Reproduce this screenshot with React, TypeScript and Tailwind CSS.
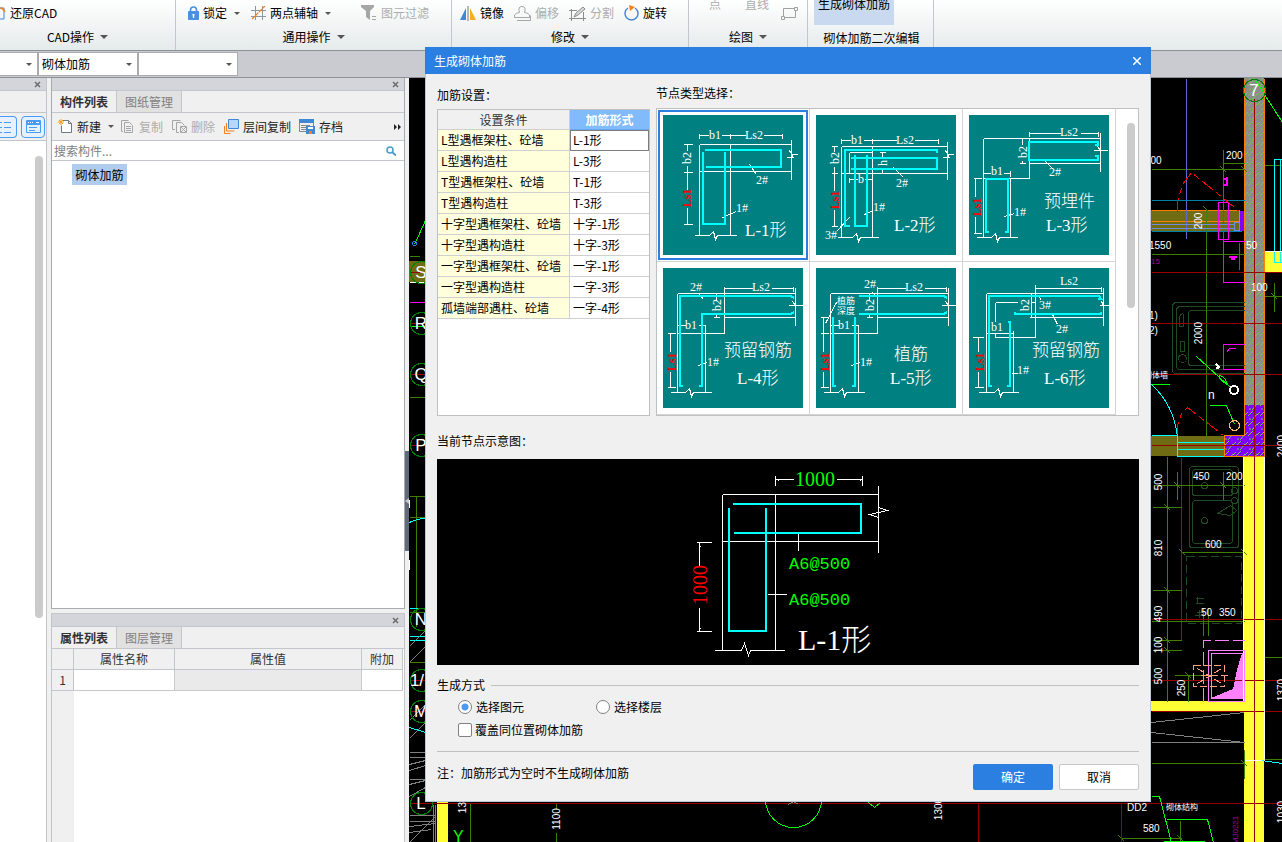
import React, { useState } from 'react';
import clsx from 'clsx';

const CYAN = '#00ffff';
const OLIVE = '#3f7f00';
const MAROON = '#990000';
const DARK = '#1f4a24';

const settings = [
  ['L型遇框架柱、砼墙', 'L-1形'],
  ['L型遇构造柱', 'L-3形'],
  ['T型遇框架柱、砼墙', 'T-1形'],
  ['T型遇构造柱', 'T-3形'],
  ['十字型遇框架柱、砼墙', '十字-1形'],
  ['十字型遇构造柱', '十字-3形'],
  ['一字型遇框架柱、砼墙', '一字-1形'],
  ['一字型遇构造柱', '一字-3形'],
  ['孤墙端部遇柱、砼墙', '一字-4形'],
];

type Label = { x: number; y: number; t: string; size?: number; red?: boolean; rot?: boolean };
type Node = { name: string; lines: string; bars: string; labels: Label[] };

const nodes: Node[] = [
  {
    name: 'L-1形',
    lines:
      'M36 18v5M67 18v5M119 18v5M36 20h9M58 20h24M100 20h19M36 29h92M36 56h92M36 29v91M67 29v91M128 24v40M123 42h7l-4-7 3 4h5M20 29h9M20 57h9M20 109h9M24 29v6M24 50v24M24 92v17M86 49l7 10M59 102l14-6M31 120h15l4-4 2 8 2-4h19',
    bars: 'M42 35H118V52H43M40 37V109H62V37',
    labels: [
      { x: 46, y: 24, t: 'b1' },
      { x: 82, y: 24, t: 'Ls2' },
      { x: 24, y: 43, t: 'b2', rot: true },
      { x: 24, y: 83, t: 'Ls1', rot: true, red: true },
      { x: 93, y: 69, t: '2#' },
      { x: 73, y: 97, t: '1#' },
      { x: 82, y: 121, t: 'L-1形', size: 17 },
    ],
  },
  {
    name: 'L-2形',
    lines:
      'M25 23v5M56 23v5M122 23v5M25 25h9M47 25h33M98 25h24M25 31h106M25 58h106M25 31v91M56 31v91M33 37h23M33 37v21M131 26v38M126 42h7l-4-7 3 4h5M15 31h6M15 58h6M15 111h6M18 31v5M18 51v24M18 94v17M33 62v5M33 64h8M48 64h8M63 37h6M66 37v5M66 53v5M77 52l10 10M48 99l9-4M33 102l-13 14M21 122h15l4-4 2 8 2-4h18',
    bars: 'M121 38V35H29V111H34M35 43H121V54H35M39 40V111H51V40',
    labels: [
      { x: 35, y: 29, t: 'b1' },
      { x: 80, y: 29, t: 'Ls2' },
      { x: 19, y: 43, t: 'b2', rot: true },
      { x: 19, y: 85, t: 'Ls1', rot: true, red: true },
      { x: 67, y: 48, t: 'h', rot: true },
      { x: 42, y: 68, t: 'b' },
      { x: 80, y: 72, t: '2#' },
      { x: 57, y: 96, t: '1#' },
      { x: 9, y: 124, t: '3#' },
      { x: 78, y: 116, t: 'L-2形', size: 17 },
    ],
  },
  {
    name: 'L-3形',
    lines:
      'M60 16v5M129 16v5M60 18h31M111 18h18M14 23h117M60 23v40M14 63h46M60 48h71M131 17v39M124 35h7l-3-4 3 4h7M14 23v99M41 63v59M14 58h7M34 58h7M41 55v6M53 23v6M53 45v3M50 48h6M4 63h8M4 118h8M6 63v18M6 101v17M74 44l10 10M35 101l10-3M7 122h15l4-4 2 8 2-4h18',
    bars: 'M126 30H129V27H60V45H129V41H126M20 117H17V64H39V117H36',
    labels: [
      { x: 91, y: 21, t: 'Ls2' },
      { x: 54, y: 37, t: 'b2', rot: true },
      { x: 22, y: 60, t: 'b1' },
      { x: 8, y: 92, t: 'Ls1', rot: true, red: true },
      { x: 80, y: 61, t: '2#' },
      { x: 45, y: 101, t: '1#' },
      { x: 75, y: 92, t: '预埋件', size: 17 },
      { x: 77, y: 116, t: 'L-3形', size: 17 },
    ],
  },
  {
    name: 'L-4形',
    lines:
      'M61 18v5M130 18v5M61 20h28M108 20h22M14 25h118M61 18v47M14 65h47M61 49h71M132 19v38M125 37h7l-3-4 3 4h7M14 25v99M42 57v67M14 57h8M35 57h7M53 25v6M53 46v3M50 49h6M4 65h8M4 119h8M7 65v18M7 103v16M36 26l4 5M35 97l9-3M7 124h15l4-4 2 8 2-4h18',
    bars: 'M131 30L128 28H17V118H20M131 44L128 46H39V118H36',
    labels: [
      { x: 89, y: 23, t: 'Ls2' },
      { x: 27, y: 23, t: '2#' },
      { x: 54, y: 37, t: 'b2', rot: true },
      { x: 22, y: 61, t: 'b1' },
      { x: 9, y: 94, t: 'Ls1', rot: true, red: true },
      { x: 44, y: 98, t: '1#' },
      { x: 61, y: 88, t: '预留钢筋', size: 17 },
      { x: 74, y: 116, t: 'L-4形', size: 17 },
    ],
  },
  {
    name: 'L-5形',
    lines:
      'M61 18v5M130 18v5M61 20h28M108 20h22M14 25h118M61 18v47M14 65h47M61 49h71M132 19v38M125 37h7l-3-4 3 4h7M14 25v99M42 57v67M14 57h8M35 57h7M53 25v6M53 46v3M50 49h6M4 49h8M4 65h8M4 119h8M7 49v34M7 103v16M20 34l-11 21M56 24l5 5M35 97l9-3M7 124h15l4-4 2 8 2-4h18',
    bars: 'M43 28H128L131 30M43 46H128L131 44M17 49V118H20M39 49V118H36',
    labels: [
      { x: 89, y: 23, t: 'Ls2' },
      { x: 48, y: 20, t: '2#' },
      { x: 54, y: 37, t: 'b2', rot: true },
      { x: 22, y: 61, t: 'b1' },
      { x: 21, y: 36, t: '植筋', size: 9 },
      { x: 21, y: 46, t: '深度', size: 9 },
      { x: 9, y: 94, t: 'Ls1', rot: true, red: true },
      { x: 44, y: 98, t: '1#' },
      { x: 78, y: 92, t: '植筋', size: 17 },
      { x: 74, y: 116, t: 'L-5形', size: 17 },
    ],
  },
  {
    name: 'L-6形',
    lines:
      'M132 18v5M66 20h66M17 25h117M66 16v53M60 49h74M134 19v38M130 37h4l-2-4 3 4h4M17 25v99M44 62v62M17 65h27M26 34h22M62 34h4M26 34v19M26 65v4M26 69h40M62 25v4M62 29v20M3 69h11M5 119h9M9 69v14M9 103v16M69 27l3 5M83 46l5 10M42 105h6M9 124h16l4-4 2 8 2-4h16',
    bars: 'M129 31H132L130 28H20V118H23M132 44V46H46V44M39 54H41V118H38',
    labels: [
      { x: 91, y: 17, t: 'Ls2' },
      { x: 56, y: 37, t: 'b2', rot: true },
      { x: 70, y: 41, t: '3#' },
      { x: 22, y: 63, t: 'b1' },
      { x: 87, y: 65, t: '2#' },
      { x: 11, y: 94, t: 'Ls1', rot: true, red: true },
      { x: 48, y: 106, t: '1#' },
      { x: 63, y: 88, t: '预留钢筋', size: 17 },
      { x: 75, y: 116, t: 'L-6形', size: 17 },
    ],
  },
];

const NodeThumb = ({ node }: { node: Node }) => (
  <svg viewBox="0 0 140 140" className="size-[140px] bg-[#008080] font-['Liberation_Serif','Noto_Sans_CJK_SC',serif]">
    <g fill="none" shapeRendering="crispEdges">
      <path d={node.lines} stroke="#fff" transform="translate(.5 .5)" />
      <path d={node.bars} stroke={CYAN} strokeWidth="2" />
    </g>
    {node.labels.map((l) =>
      l.rot ? (
        <text
          key={l.t}
          transform={`translate(${l.x + 4} ${l.y}) rotate(-90)`}
          textAnchor="middle"
          fontSize="12"
          fontWeight={l.red ? 700 : 400}
          fill={l.red ? '#ff0000' : '#fff'}
        >
          {l.t}
        </text>
      ) : (
        <text
          key={l.t + l.y}
          x={l.x}
          y={l.y}
          fontSize={l.size ?? 12}
          fontWeight={l.size === 17 ? 300 : 400}
          fill="#fff"
        >
          {l.t}
        </text>
      ),
    )}
  </svg>
);

const Preview = () => (
  <svg viewBox="0 0 702 206" className="block h-[206px] w-full bg-black">
    <g fill="none" shapeRendering="crispEdges">
      <g transform="translate(.5 .5)" stroke="#fff">
        <path d="M338 16v10M425 16v10M338 20h18M399 20h26M285 35h156M285 82h156M285 35v156M338 35v156M441 26v67M361 74v17M330 135h19M259 83h15M259 172h15M262 83v23M262 148v24M277 191h27M313 191h34" />
        <path d="M304 191l3-7 4 12 2-5M441 58l-9-3 18-4-9-3" />
        <path strokeWidth="2" d="M340 20h1M422 20h1M262 86v1M262 168v1" />
      </g>
      <path stroke={CYAN} strokeWidth="2" d="M296 45H424V74H297M292 49V172H329V49" />
    </g>
    <g className="font-['Liberation_Mono','Noto_Sans_CJK_SC',monospace]" fill="#00ff00" fontSize="17">
      <text x="352" y="110">
        A6@500
      </text>
      <text x="352" y="146">
        A6@500
      </text>
    </g>
    <g className="font-['Liberation_Serif','Noto_Sans_CJK_SC',serif]">
      <text x="358" y="27" fontSize="20" fill="#00ff00">
        1000
      </text>
      <text transform="translate(270 126) rotate(-90)" textAnchor="middle" fontSize="20" fill="#ff0000">
        1000
      </text>
      <text x="361" y="191" fontSize="30" fontWeight="300" fill="#fff">
        L-1形
      </text>
    </g>
  </svg>
);

const bubbles = [
  { y: 272, t: 'S' },
  { y: 323, t: 'R' },
  { y: 374, t: 'Q' },
  { y: 445, t: 'P' },
  { y: 619, t: 'N' },
  { y: 680, t: '1/' },
  { y: 711, t: 'M' },
  { y: 803, t: 'L' },
];

const dims = [
  { x: 1145, y: 164, t: '500' },
  { x: 1226, y: 159, t: '200' },
  { x: 1149, y: 249, t: '1550' },
  { x: 1246, y: 249, t: '50' },
  { x: 1251, y: 291, t: '100' },
  { x: 1144, y: 319, t: 'x1)' },
  { x: 1144, y: 334, t: 'x2)' },
  { x: 1193, y: 480, t: '450' },
  { x: 1226, y: 480, t: '200' },
  { x: 1205, y: 548, t: '600' },
  { x: 1201, y: 616, t: '50' },
  { x: 1219, y: 616, t: '350' },
  { x: 1127, y: 811, t: 'DD2' },
  { x: 1143, y: 832, t: '580' },
];

const verticalDims = [
  { x: 1198, y: 221, t: '200' },
  { x: 1198, y: 333, t: '2000' },
  { x: 1281, y: 446, t: '2400' },
  { x: 1158, y: 482, t: '500' },
  { x: 1158, y: 548, t: '810' },
  { x: 1158, y: 614, t: '490' },
  { x: 1158, y: 645, t: '100' },
  { x: 1158, y: 676, t: '500' },
  { x: 1181, y: 688, t: '250' },
  { x: 1281, y: 690, t: '1370' },
  { x: 1281, y: 812, t: '1030' },
  { x: 462, y: 802, t: '1390' },
  { x: 556, y: 819, t: '1100' },
  { x: 938, y: 809, t: '1300' },
];

const Drawing = () => (
  <svg viewBox="409 78 873 764" preserveAspectRatio="xMinYMin slice" className="block size-full bg-black">
    <defs>
      <pattern id="wall" width="12" height="10" patternUnits="userSpaceOnUse">
        <rect width="12" height="10" fill="#8c8c8c" />
        <path d="M0 6l5-5M4 10l5-6M9 5l3-3M1 9h2" stroke="#72c850" />
      </pattern>
      <pattern id="column" width="12" height="10" patternUnits="userSpaceOnUse">
        <rect width="12" height="10" fill="#8000ff" />
        <path d="M0 6l5-5M4 10l5-6M9 5l3-3M1 9h2" stroke="#72c850" />
      </pattern>
    </defs>
    <g fill="none" shapeRendering="crispEdges">
      <g stroke="none">
        <path fill="#706c14" d="M409 261h30v21h-30zM1151 210h88v21h-88zM1151 436h73v20h-73z" />
        <path fill="#ffff33" d="M1244 456h20v386h-20zM1100 701h144v10h-144zM1265 251h17v21h-17zM437 802h11v40h-11z" />
        <path fill="url(#wall)" d="M1244 78h20v327h-20z" />
        <path fill="url(#column)" d="M1244 405h20v51h-40v-21h20z" />
        <path fill="#8000ff" d="M1240 211h4v20h-4z" />
        <path fill="#ff80ff" d="M1242 653v45h-31l22-9 4-19z" />
      </g>
      <g transform="translate(.5 .5)">
        <path stroke="#ff7f00" d="M1244 78v357h-20v21h40V78M1151 210h88v21M1151 221h88" />
        <path
          stroke={DARK}
          d="M1244 302h-68q-4 0-4 4v63q0 4 4 4h68M1244 306h-64q-4 0-4 4v55q0 4 4 4h64M1244 310h-53q-3 0-3 3v49q0 3 3 3h53M1181 457v183M1179 316q4-6 4 0v10h-4zM1180 341h4v10h-4z"
        />
        <path
          stroke={DARK}
          d="M1192 466h43q3 0 3 3v75q0 3-3 3h-43q-3 0-3-3v-75q0-3 3-3zM1195 469h34q3 0 3 3v20q0 3-3 3h-34q-3 0-3-3v-20q0-3 3-3zM1195 500h34q3 0 3 3v36q0 4-3 4h-34q-3 0-3-4v-36q0-3 3-3zM1217 513l13-8 6 5-6 5z"
        />
        <path stroke={DARK} strokeDasharray="8 4" d="M1186 556h55v67h-55z" />
        <path stroke={DARK} d="M1195 598h8M1197 596v7M1195 603h8M1196 612h6M1199 609v8M1194 615h10" />
        <g stroke={DARK}>
          <circle cx="1182" cy="358" r="4" />
          <circle cx="1204" cy="485" r="3" />
          <circle cx="1204" cy="520" r="3" />
          <circle cx="1234" cy="490" r="3" />
          <circle cx="1234" cy="500" r="3" />
        </g>
        <path
          stroke={OLIVE}
          d="M1151 169h93M1223 149v91M1223 163h21M1264 165h18M1206 209v227M1151 254h93M1239 242v27M1264 296h18M1274 282v29M1153 485h91M1177 471v28M1223 471v28M1167 456v245M1152 507h29M1152 590h29M1152 640h29M1152 650h29M1182 552h62M1151 621h93M1203 607v28M1208 607v28M1174 675h40M1188 675v26M1151 763h93M1244 749v29M1264 657h18M1264 625v46M1276 619h6M1121 838h60M1180 820v22M1121 820v22M1264 759h18"
        />
        <path
          stroke={OLIVE}
          d="M1220 166l6 6M1241 166l6 6M1203 206l6 6M1271 293l6 6M1164 504l6 6M1164 587l6 6M1164 637l6 6M1164 647l6 6M1179 549l6 6M1241 549l6 6M1174 482l6 6M1220 482l6 6M1185 672l6 6M1241 760l6 6M1118 835l6 6M1177 835l6 6"
        />
        <path stroke={OLIVE} d="M409 397h16M409 496h16M409 517h16M416 496v130M409 256h10M409 662h16M409 612h16M470 802v40M556 802v6M556 832v10" />
        <path
          stroke={MAROON}
          d="M1151 272h131M1151 323h131M1151 374h131M1151 445h131M1151 619h131M1151 680h131M1151 711h131M409 803h873M1254 98v744M1121 803v39M978 802v40"
        />
        <path stroke={MAROON} d="M409 272h16M409 323h16M409 374h16M409 445h16M409 680h16M409 711h16" />
        <path stroke="#6666cc" d="M1186 78v160" />
        <path stroke="#6a8be0" d="M1151 224h83M1151 228h83M1234 222h5v8h-5z" />
        <path stroke="#0080a8" d="M1151 200h93M1151 231h90" />
        <path stroke="#ff00ff" d="M1218 202h10v37h-10zM1244 241h-21v41h21M1244 344h-21v25h21M1226 352l3-4h6M409 302h16" />
        <path stroke="#ff00ff" strokeWidth="2" d="M1228 256h8M1230 258h4M1222 178h5M1222 184h5M1226 176v9" />
        <path stroke="#ff0000" strokeDasharray="14 4 6 4" d="M1177 211v-10l5-17 9-12 48 39M1177 435v-10l4-12 6-6 36 28" />
        <path stroke={CYAN} d="M1151 384q22 20 26 52M1177 435v21M1151 435h26M1177 442h46M1177 449h46M1177 456h46M1282 159h-8v103h8M1280 159v103M1261 760l21 3" />
        <path stroke={CYAN} d="M409 522q8-4 16-4M409 608h16M409 636h16M409 640h16M409 727l16 5" />
        <path stroke="#00ff00" d="M1255 80l27 42M1196 356l34 31M1209 405h17l8 19M1151 384h18M1151 796h8l12 46M1166 819h41l6 23M425 220l-11 24M409 326h16M868 802l6 5 6-5" />
        <path stroke="#00ff00" strokeWidth="2" d="M1163 841h41" />
        <path stroke="#fff" d="M409 282h16M1243 456v245M1264 456v304M1264 251h17M1244 760h17" />
        <path stroke="#ff80ff" d="M1208 650h36v51h-36zM1211 653h31v45h-31z" />
        <path stroke="#ff80ff" strokeDasharray="14 4" d="M1203 701v-61h41" />
        <path stroke="#ffa080" strokeDasharray="7 3" d="M1193 665h31v21h-31zM1197 668l24 15M1197 683l24-15M1200 675h27" />
        <path stroke="#808080" d="M1151 722l93-10M1151 732l93 10M1151 742h93M788 804l5-3 5 3" />
        <path
          stroke="#808080"
          d="M409 646l16-16M409 662l16-16M409 720l16-16M409 738l16-16M409 752h16M409 757h16M409 764l16-4M409 770l16-5M409 779h16M409 784l16-4M409 796l16-9M409 815h26M409 821h26M409 826l26-3M409 832l22-3M409 842l26-26M433 804v38M435 804v38"
        />
        <circle cx="414" cy="243" r="2" stroke="#2080ff" />
        <circle cx="1234" cy="425" r="5" stroke="#ffb870" />
        <circle cx="793" cy="799" r="28" stroke="#00ff00" />
        <circle cx="1254" cy="90" r="11" stroke="#008000" />
        {bubbles.map((b) => (
          <circle key={b.t} cx="421" cy={b.y} r="11" stroke="#008000" />
        ))}
      </g>
      <circle cx="1234" cy="390" r="4" stroke="#fff" strokeWidth="2" />
      <path stroke="#00ff00" d="M1219 376q5-1 8 7-7-1-8-7" />
      <path stroke="#fff" strokeWidth="2" d="M1216 364l4 4M1216 368h3M409 560v10M409 500v8" />
    </g>
    <g fill="#fff" className="font-['Liberation_Sans','Noto_Sans_CJK_SC',sans-serif]">
      <g fontSize="17" textAnchor="middle">
        {bubbles.map((b) => (
          <text key={b.t} x={b.t === '1/' ? 417 : 421} y={b.y + 6}>
            {b.t}
          </text>
        ))}
        <text x="1254" y="96">
          7
        </text>
      </g>
      <text x="1208" y="399" fontSize="12">
        n
      </text>
      <text x="1144" y="378" fontSize="8">
        砌体墙
      </text>
      <text x="1166" y="810" fontSize="8">
        砌体结构
      </text>
      <text x="453" y="842" fontSize="16" fill="#00ff00">
        Y
      </text>
    </g>
    <g fill="#fff" fontSize="10" className="font-['Liberation_Sans',sans-serif]">
      {dims.map((d) => (
        <text key={d.t + d.y + d.x} x={d.x} y={d.y}>
          {d.t}
        </text>
      ))}
      {verticalDims.map((d) => (
        <text key={d.t + d.y} transform={`translate(${d.x + 4} ${d.y}) rotate(-90)`} textAnchor="middle">
          {d.t}
        </text>
      ))}
      <g fill="#a000a0" fontSize="8">
        <text x="1140" y="264">
          M915
        </text>
        <text transform="translate(1238 830) rotate(-90)" textAnchor="middle">
          MJ0221
        </text>
      </g>
    </g>
  </svg>
);

const Caret = ({ small }: { small?: boolean }) => (
  <svg viewBox="0 0 8 4" className={small ? 'h-[3px] w-1.5' : 'h-1 w-2'}>
    <path d="M0 0h8L4 4z" fill="#555" />
  </svg>
);

const CloseMark = () => (
  <svg viewBox="0 0 7 7" className="size-[7px]">
    <path d="M1 1l5 5M6 1L1 6" stroke="#6c6c6c" strokeWidth="1.5" />
  </svg>
);

type ToolProps = { label: string; icon: React.ReactNode; disabled?: boolean; caret?: boolean; className?: string };

const Tool = ({ label, icon, disabled, caret, className }: ToolProps) => (
  <button
    type="button"
    disabled={disabled}
    className={clsx('flex items-center gap-1 whitespace-nowrap', disabled && 'text-[#adadad]', className)}
  >
    {icon}
    {label}
    {caret && (
      <span className="ml-[3px]">
        <Caret small />
      </span>
    )}
  </button>
);

type GroupProps = { title: string; caret?: boolean; className?: string; children: React.ReactNode };

const Group = ({ title, caret = true, className, children }: GroupProps) => (
  <section className={clsx('flex h-full shrink-0 flex-col border-r border-[#c3c6ca]', className)}>
    <div className="flex h-[26px] items-center">{children}</div>
    <div className={clsx('flex items-center justify-center gap-1.5', caret ? 'h-[22px]' : 'h-6 pl-0.5')}>
      {title}
      {caret && <Caret />}
    </div>
  </section>
);

const Ribbon = () => (
  <header className="flex h-[51px] shrink-0 border-b border-[#8d9298] bg-linear-to-b from-white to-[#e5eaeb]">
    <Group title="CAD操作" className="w-44 pr-5">
      <Tool
        label="还原CAD"
        icon={
          <svg viewBox="0 0 6 14" className="h-3.5 w-1.5" fill="none">
            <path d="M0 2h4v11H0" stroke="#3f87d8" />
            <path d="M0 2q3 0 5 4" stroke="#f08020" strokeWidth="1.5" />
          </svg>
        }
      />
    </Group>
    <Group title="通用操作" className="w-[276px]">
      <Tool
        className="ml-3"
        label="锁定"
        caret
        icon={
          <svg viewBox="0 0 11 14" className="h-3.5 w-[11px]" fill="none">
            <path d="M2.5 6V4a3 3 0 016 0v2" stroke="#4a90e2" strokeWidth="1.6" />
            <rect y="5" width="11" height="9" rx="1" fill="#4a90e2" />
            <path d="M4.5 8h2v1l-.5 3h-1l-.5-3z" fill="#fff" />
          </svg>
        }
      />
      <Tool
        className="ml-[11px]"
        label="两点辅轴"
        caret
        icon={
          <svg viewBox="0 0 15 14" className="h-3.5 w-[15px]" fill="none">
            <path d="M4.500 0v14M11.500 0v14M0 4.500h15M0 10.500h15" stroke="#8d979e" />
            <path d="M1 13L14 0" stroke="#f08020" strokeWidth="1.3" strokeDasharray="4 1" />
          </svg>
        }
      />
      <Tool
        className="ml-[30px]"
        label="图元过滤"
        disabled
        icon={
          <svg viewBox="0 0 16 16" className="size-4">
            <path d="M0 0h13v2L9 6v9l-4-3V6L0 2z" fill="#a6a6a6" />
            <path d="M11 11.500h4M11 14.500h4" stroke="#a6a6a6" />
          </svg>
        }
      />
    </Group>
    <Group title="修改" className="w-[237px]">
      <Tool
        className="ml-2"
        label="镜像"
        icon={
          <svg viewBox="0 0 16 15" className="h-[15px] w-4">
            <path d="M6 2v12H0z" fill="#3f87d8" />
            <path d="M10 2v12h6z" fill="#f6ae1c" />
            <path d="M8 0v15" stroke="#6b7880" />
          </svg>
        }
      />
      <Tool
        className="ml-2.5"
        label="偏移"
        disabled
        icon={
          <svg viewBox="0 0 17 15" className="h-[15px] w-[17px]" fill="none" stroke="#a6a6a6">
            <path d="M.5 11.500V9q1-2 5-2.500-2-6 2.500-6t2.500 6q4 .5 5 2.500v2.500zM3 14.500h13.500v-5M.5 11.500h15" />
          </svg>
        }
      />
      <Tool
        className="ml-2.5"
        label="分割"
        disabled
        icon={
          <svg viewBox="0 0 17 15" className="h-[15px] w-[17px]" fill="none" stroke="#8c8c8c">
            <path d="M8 4.500H0M2.500 3v12M0 12.500h17M14.500 6v9" />
            <path d="M5 11l2-4 7-6 2 2-7 6z" fill="#d8d8d8" />
          </svg>
        }
      />
      <Tool
        className="ml-[9px]"
        label="旋转"
        icon={
          <svg viewBox="0 0 16 16" className="size-4" fill="none">
            <path d="M5 3a6.500 6.500 0 107 0" stroke="#3f87d8" strokeWidth="1.4" />
            <path d="M6 0l6 2-5 4z" fill="#f08020" />
          </svg>
        }
      />
    </Group>
    <Group title="绘图" className="w-[119px]">
      <div className="flex w-full items-center gap-6 pl-5 text-[#adadad]">
        <span className="-mt-[18px]">点</span>
        <span className="-mt-[18px]">直线</span>
        <svg viewBox="0 0 17 13" className="-ml-3 h-[13px] w-[17px]" fill="none" stroke="#a0a0a0">
          <path d="M2.500 1.500h12v9h-12z" />
          <path d="M.5 9.500h3v3h-3zM13.500 .5h3v3h-3z" fill="#f6f8f8" />
        </svg>
      </div>
    </Group>
    <Group title="砌体加筋二次编辑" caret={false} className="w-[126px] gap-px">
      <button type="button" className="ml-1.5 flex h-[25px] w-20 justify-center self-start bg-[#c9d9ef] leading-2">
        生成砌体加筋
      </button>
    </Group>
  </header>
);

const Combo = ({ label, value, className }: { label: string; value: string; className: string }) => (
  <div className={clsx('grid h-[22px] items-center bg-white outline outline-[#a9abaf]', className)}>
    <select aria-label={label} className="col-start-1 row-start-1 h-full w-full appearance-none pl-[3px]">
      <option>{value}</option>
    </select>
    <span className="pointer-events-none col-start-1 row-start-1 mr-[5px] flex justify-self-end">
      <Caret small />
    </span>
  </div>
);

const PanelHeader = () => (
  <div className="flex h-3 shrink-0 items-center justify-end bg-[#d3d5da] pr-[5px]">
    <button type="button" aria-label="关闭面板">
      <CloseMark />
    </button>
  </div>
);

const PanelTabs = ({ tabs }: { tabs: string[] }) => (
  <div role="tablist" className="flex h-[23px] shrink-0 border-y border-[#c3c6cc] bg-[#f0f0f0]">
    {tabs.map((t, i) => (
      <button
        key={t}
        role="tab"
        type="button"
        aria-selected={i === 0}
        className={clsx(
          'w-[65px] border-r border-[#c3c6cc] text-center',
          i === 0 ? 'font-bold text-[#333]' : 'bg-[#e1e1e1] text-[#808080]',
        )}
      >
        {t}
      </button>
    ))}
  </div>
);

const SideStrip = () => (
  <aside className="flex w-[47px] shrink-0 flex-col border-r border-[#c3c6cc] bg-white">
    <PanelHeader />
    <div className="h-[23px] shrink-0 border-y border-[#c3c6cc] bg-[#f0f0f0]" />
    <div className="flex h-7 shrink-0 items-center gap-1 border-b border-[#c3c6cc] bg-[#f0f0f0]">
      <button
        type="button"
        aria-label="列表视图"
        className="h-[22px] w-[17px] rounded-r-sm border border-l-0 border-[#4a9bf5] bg-[#e6f1fd]"
      >
        <svg viewBox="0 0 16 20" className="h-5 w-4" fill="none" stroke="#4a9bf5">
          <path d="M0 5.500h2M4 5.500h7M0 10.500h2M4 10.500h7M0 15.500h2M4 15.500h7" />
        </svg>
      </button>
      <button
        type="button"
        aria-label="窗口视图"
        className="flex h-[22px] w-6 items-center justify-center rounded-sm border border-[#4a9bf5] bg-[#e6f1fd]"
      >
        <svg viewBox="0 0 15 13" className="h-[13px] w-[15px]">
          <rect width="15" height="13" rx="1" fill="#4a9bf5" />
          <path d="M2 2.500h1M4 2.500h1M6 2.500h1M10 2.500h3" stroke="#fff" />
          <path d="M1 5h13v7H1z" fill="#e6f1fd" />
          <path d="M3 7.500h8M3 10.500h6" stroke="#4a9bf5" />
        </svg>
      </button>
    </div>
    <div className="mt-[15px] mr-[3px] h-[462px] w-2 self-end rounded-full bg-[#cbcbcb]" />
  </aside>
);

const ComponentPanel = () => (
  <section className="flex min-h-0 flex-1 flex-col border-x border-b border-[#a8abb0] bg-white">
    <PanelHeader />
    <PanelTabs tabs={['构件列表', '图纸管理']} />
    <div className="flex h-7 shrink-0 items-center border-b border-[#c3c6cc] bg-[#f0f0f0] text-[#222]">
      <Tool
        className="ml-1.5"
        label="新建"
        caret
        icon={
          <svg viewBox="0 0 15 15" className="size-[15px]" fill="none">
            <path d="M4.500 1.500h6l3 3v9h-10v-7" fill="#fff" stroke="#6d7a82" />
            <path d="M10.500 1.500v3h3" stroke="#6d7a82" />
            <path d="M0 3h6M3 0v6M1 1l4 4M5 1L1 5" stroke="#f5a01c" />
          </svg>
        }
      />
      <Tool
        className="ml-1.5"
        label="复制"
        disabled
        icon={
          <svg viewBox="0 0 15 15" className="size-[15px]" fill="none" stroke="#a6a6a6">
            <path d="M3 12.500H1.500V1.500h7M4.500 3.500h5l3 3v7h-8zM6 7.500h5M6 9.500h5M6 11.500h5" />
          </svg>
        }
      />
      <Tool
        className="ml-[9px]"
        label="删除"
        disabled
        icon={
          <svg viewBox="0 0 15 15" className="size-[15px]" fill="none" stroke="#a6a6a6">
            <path d="M3 10.500H.5v-9h8M7 13.500H4.500v-10h5l3 3M8.500 7.500h6v6h-6zM9 8l5 5M14 8l-5 5" />
          </svg>
        }
      />
      <Tool
        className="ml-[9px]"
        label="层间复制"
        icon={
          <svg viewBox="0 0 15 15" className="size-[15px]" fill="none">
            <path d="M4.500 .5h10v9h-10z" fill="#b9d6f8" stroke="#3f87d8" />
            <path d="M2.500 4v8h8M.5 7v7.500h6" stroke="#f08020" />
          </svg>
        }
      />
      <Tool
        className="ml-2"
        label="存档"
        icon={
          <svg viewBox="0 0 16 15" className="h-[15px] w-4" fill="none">
            <path d="M.5 .5h14v12H.5z" stroke="#7b8890" />
            <path d="M0 0h15v4H0z" fill="#3f87d8" />
            <path d="M2 6.500h9M2 8.500h5M2 10.500h5" stroke="#7b8890" />
            <path d="M7 7h9v8H7z" fill="#3f87d8" />
            <path d="M9 8h5v2H9z" fill="#fff" />
            <path d="M10 12h3v3h-3z" fill="#f08020" />
          </svg>
        }
      />
      <button type="button" aria-label="更多" className="mr-[3px] ml-auto">
        <svg viewBox="0 0 7 6" className="h-1.5 w-[7px]">
          <path d="M0 0l3 3-3 3zM4 0l3 3-3 3z" fill="#222" />
        </svg>
      </button>
    </div>
    <label className="flex h-5 shrink-0 items-center border-b border-[#c3c6cc] pr-2">
      <input
        type="text"
        aria-label="搜索构件"
        placeholder="搜索构件..."
        className="min-w-0 flex-1 pl-0.5 outline-none placeholder:text-[#808080]"
      />
      <svg viewBox="0 0 10 10" className="size-2.5" fill="none" stroke="#4a9cc8">
        <circle cx="4" cy="4" r="3" strokeWidth="1.500" />
        <path d="M6 6l4 3.500" strokeWidth="2" />
      </svg>
    </label>
    <div className="pt-[3px] pl-5">
      <div className="flex h-[21px] w-[55px] items-center justify-center bg-[#afcbed]">砌体加筋</div>
    </div>
  </section>
);

const PropertyPanel = () => (
  <section className="mt-1 flex h-[229px] shrink-0 flex-col border border-b-0 border-[#c3c6cc] bg-white">
    <PanelHeader />
    <PanelTabs tabs={['属性列表', '图层管理']} />
    <table className="w-[351px] table-fixed border-separate border-spacing-0 text-[#333] [&_td]:h-[21px] [&_td]:border-r [&_td]:border-b [&_td]:border-[#c9c9c9] [&_th]:h-[21px] [&_th]:border-r [&_th]:border-b [&_th]:border-[#c3c6cc] [&_th]:bg-[#f0f0f0] [&_th]:font-normal">
      <thead>
        <tr>
          <th className="w-[22px]" />
          <th className="w-[101px]">属性名称</th>
          <th>属性值</th>
          <th className="w-[41px]">附加</th>
        </tr>
      </thead>
      <tbody>
        <tr>
          <th>1</th>
          <td />
          <td className="bg-[#eaeaea]" />
          <td />
        </tr>
      </tbody>
    </table>
    <div className="w-[22px] flex-1 bg-[#f0f0f0]" />
  </section>
);

const SettingsTable = () => (
  <div className="h-[307px] border border-[#c0c0c0] bg-white">
    <table className="w-full table-fixed border-separate border-spacing-0">
      <thead>
        <tr>
          <th className="h-5 w-[132px] border-r border-b border-[#d0d0d0] bg-[#f0f0f0] font-normal text-[#333]">
            设置条件
          </th>
          <th className="h-5 border-b border-[#68a8f0] bg-[#82bbfb] font-bold text-white">加筋形式</th>
        </tr>
      </thead>
      <tbody>
        {settings.map(([condition, form], i) => (
          <tr key={condition}>
            <td className="h-[21px] border-r border-b border-[#d0d0d0] bg-[#ffffdc] pl-[3px] whitespace-nowrap">
              {condition}
            </td>
            <td
              className={clsx(
                'h-[21px] border-b border-[#d0d0d0] pl-[3px]',
                i === 0 && 'outline -outline-offset-1 outline-[#7d7d7d]',
              )}
            >
              {form}
            </td>
          </tr>
        ))}
      </tbody>
    </table>
  </div>
);

const RebarDialog = () => {
  const [selected, setSelected] = useState('L-1形');
  const [target, setTarget] = useState('element');

  return (
    <div
      role="dialog"
      aria-label="生成砌体加筋"
      className="absolute top-[47px] left-[425px] w-[726px] border-x border-b border-[#b9c6d6] bg-[#f0f0f0] px-[11px] pb-[11px]"
    >
      <div className="-mx-3 flex h-[27px] items-center justify-between bg-[#2b7fe0] pr-2.5 pl-[9px] text-white">
        <span>生成砌体加筋</span>
        <button type="button" aria-label="关闭">
          <svg viewBox="0 0 8 8" className="size-2">
            <path d="M0 0l8 8M8 0L0 8" stroke="#fff" strokeWidth="1.500" />
          </svg>
        </button>
      </div>
      <div className="flex gap-1.5">
        <div className="w-[213px] shrink-0">
          <h2 className="pt-[13px] pb-1.5">加筋设置：</h2>
          <SettingsTable />
        </div>
        <div className="min-w-0 flex-1">
          <h2 className="pt-[11px] pb-[7px]">节点类型选择：</h2>
          <div className="flex h-[308px] justify-between border border-[#c0c0c0] bg-white pr-[3px]">
            <div className="grid grid-cols-[153px_153px_153px] grid-rows-[153px_153px]">
              {nodes.map((node) => (
                <div key={node.name} className="border-r border-b border-[#d4d4d4] p-px">
                  <button
                    type="button"
                    aria-label={node.name}
                    onClick={() => setSelected(node.name)}
                    className={clsx(
                      'flex size-full items-center justify-center border-2',
                      selected === node.name ? 'border-[#2b7fe0]' : 'border-transparent',
                    )}
                  >
                    <NodeThumb node={node} />
                  </button>
                </div>
              ))}
            </div>
            <div className="mt-3.5 h-[185px] w-2 rounded-full bg-[#cbcbcb]" />
          </div>
        </div>
      </div>
      <h2 className="pt-[17px] pb-2.5">当前节点示意图：</h2>
      <Preview />
      <fieldset className="mt-3 border-t border-[#c0c0c0]">
        <legend className="pr-1.5">生成方式</legend>
        <div className="flex pt-1.5 pl-[21px]">
          {[
            ['element', '选择图元'],
            ['floor', '选择楼层'],
          ].map(([value, label]) => (
            <label key={value} className="flex w-[138px] items-center gap-1">
              <input
                type="radio"
                name="target"
                value={value}
                checked={target === value}
                onChange={() => setTarget(value)}
                className="size-3.5 appearance-none rounded-full border border-[#808080] bg-white checked:bg-[radial-gradient(circle,#4a9bf5_3px,#fff_4px)]"
              />
              {label}
            </label>
          ))}
        </div>
        <label className="mt-[7px] flex items-center gap-[3px] pl-[21px]">
          <input type="checkbox" className="size-3.5 appearance-none rounded-xs border border-[#808080] bg-white" />
          覆盖同位置砌体加筋
        </label>
      </fieldset>
      <div className="mt-[13px] flex items-center gap-1.5 border-t border-[#c0c0c0] pt-3">
        <p className="-mt-2 flex-1">注：加筋形式为空时不生成砌体加筋</p>
        <button type="button" className="h-[26px] w-20 rounded-xs bg-[#2b7fe0] text-white">
          确定
        </button>
        <button type="button" className="h-[26px] w-20 rounded-xs border border-[#c8c8c8] bg-white">
          取消
        </button>
      </div>
    </div>
  );
};

const App = () => (
  <div className="relative flex h-screen w-full flex-col overflow-hidden bg-[#f0f0f0] font-['Noto_Sans_CJK_SC',sans-serif] text-xs/4 text-black">
    <Ribbon />
    <div className="flex h-[27px] shrink-0 items-center gap-0.5 border-b border-[#8d9298] bg-[#c9cbd0]">
      <Combo label="楼层" value="" className="w-[37px]" />
      <Combo label="构件类型" value="砌体加筋" className="w-[98px]" />
      <Combo label="构件" value="" className="w-[98px]" />
    </div>
    <main className="flex min-h-0 flex-1">
      <SideStrip />
      <div className="ml-1 flex w-[354px] shrink-0 flex-col">
        <ComponentPanel />
        <PropertyPanel />
      </div>
      <div className="flex w-1 shrink-0 flex-col pt-[373px]">
        <button type="button" aria-label="折叠面板" className="flex h-[100px] items-center bg-[#5f6b78]">
          <svg viewBox="0 0 4 6" className="h-1.5 w-1">
            <path d="M4 0v6L0 3z" fill="#c8c8c8" />
          </svg>
        </button>
      </div>
      <div className="min-w-0 flex-1">
        <Drawing />
      </div>
    </main>
    <RebarDialog />
  </div>
);

export default App;
